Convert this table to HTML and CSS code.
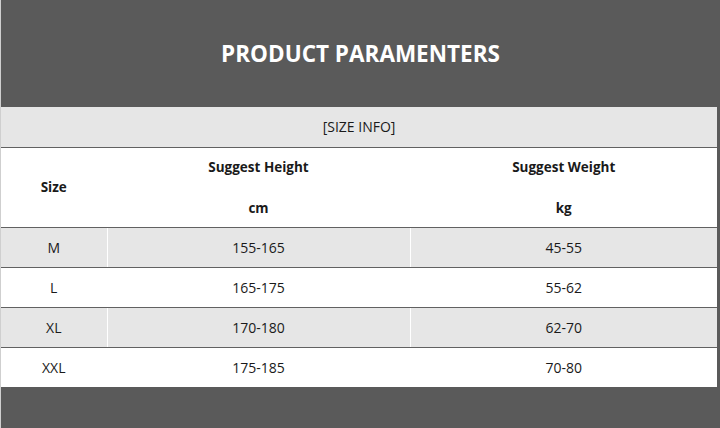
FILE: index.html
```
<!DOCTYPE html>
<html>
<head>
<meta charset="utf-8">
<link rel="stylesheet" href="styles.css">
</head>
<body>
<div class="page">
  <header class="banner"><h1 class="title">PRODUCT PARAMENTERS</h1></header>
  <table class="sizes">
    <colgroup>
      <col class="col-size">
      <col class="col-height">
      <col class="col-weight">
    </colgroup>
    <tr class="info-row"><td colspan="3" class="info">[SIZE INFO]</td></tr>
    <tr class="head-top">
      <th rowspan="2" class="c1">Size</th>
      <th class="c2 sub">Suggest Height</th>
      <th class="c3 sub">Suggest Weight</th>
    </tr>
    <tr class="head-bottom">
      <th class="c2 sub">cm</th>
      <th class="c3 sub">kg</th>
    </tr>
    <tr class="row grey"><td class="c1">M</td><td class="c2">155-165</td><td class="c3">45-55</td></tr>
    <tr class="row"><td class="c1">L</td><td class="c2">165-175</td><td class="c3">55-62</td></tr>
    <tr class="row grey"><td class="c1">XL</td><td class="c2">170-180</td><td class="c3">62-70</td></tr>
    <tr class="row last"><td class="c1">XXL</td><td class="c2">175-185</td><td class="c3">70-80</td></tr>
  </table>
</div>
</body>
</html>
```
FILE: styles.css
```
html, body {
  margin: 0;
  padding: 0;
}
body {
  background: #5a5a5a;
  width: 720px;
  height: 428px;
  overflow: hidden;
  font-family: "Open Sans", "Noto Sans", sans-serif;
  color: #1a1a1a;
}
.page {
  border-left: 1px solid #cfcfcf;
  height: 428px;
  box-sizing: border-box;
}
.banner {
  height: 107px;
  display: flex;
  align-items: center;
  justify-content: center;
}
.title {
  margin: 0;
  color: #ffffff;
  font-size: 22.5px;
  font-weight: 700;
  letter-spacing: 0;
  padding-bottom: 1px;
}
.sizes {
  width: 716px;
  border-collapse: collapse;
  table-layout: fixed;
  font-size: 14px;
}
.col-size { width: 106px; }
.col-height { width: 303px; }
.col-weight { width: 307px; }
.sizes td, .sizes th {
  padding: 0;
  text-align: center;
  vertical-align: middle;
  box-sizing: border-box;
}
.info-row {
  background: #e6e6e6;
}
.info {
  height: 40px;
  border-bottom: 1px solid #616161;
}
.head-top, .head-bottom {
  background: #ffffff;
}
.sizes th {
  font-weight: 700;
  font-size: 13.5px;
}
.head-top th.sub {
  height: 40px;
}
.head-bottom th {
  height: 40px;
  border-bottom: 1px solid #616161;
  padding-top: 2px;
}
th.c1 {
  border-bottom: 1px solid #616161;
}
.c2, .c3 {
  border-left: 1px solid #ffffff;
}
.row {
  background: #ffffff;
}
.row.grey {
  background: #e6e6e6;
}
.row td {
  height: 40px;
  border-bottom: 1px solid #616161;
}
.row.last td {
  border-bottom: none;
}
```
